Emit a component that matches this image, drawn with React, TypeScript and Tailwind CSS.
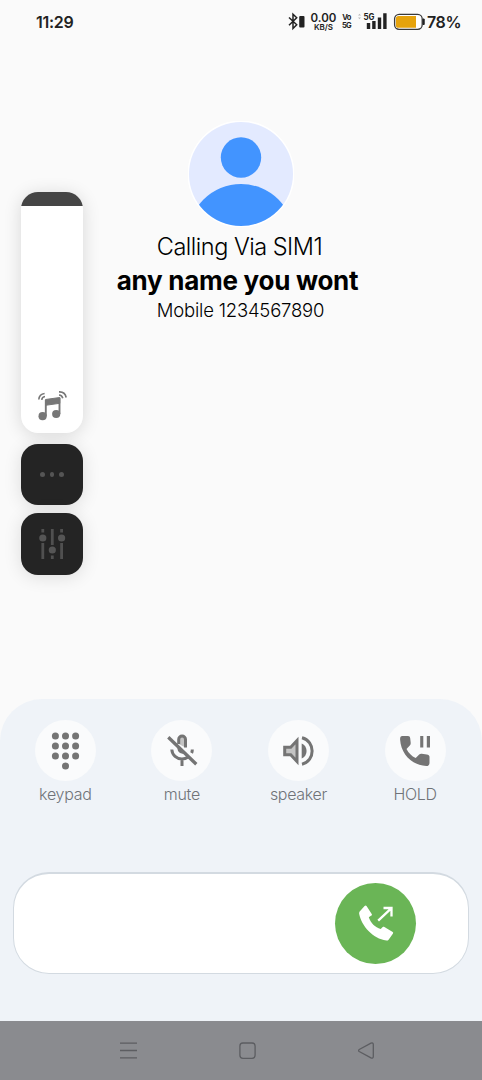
import type { ReactNode } from 'react';

const StatusBar = () => (
  <header className="flex h-11 items-center pl-9 pr-[21px] text-[#222]">
    <span className="w-[38px] whitespace-nowrap text-[16px] font-semibold leading-none tracking-[-0.3px]">11:29</span>

    <div className="ml-auto flex items-center">
      <svg className="h-5 w-[17px]" viewBox="288 12 17 20" fill="none">
        <path d="M289 17.5l7.7 7.3-3.7 3.7V14.3l3.7 3.5-7.7 7.5" stroke="#222" strokeWidth="1.5" />
        <rect x="299.2" y="16" width="5.3" height="11.5" rx="1" fill="#222" />
      </svg>
      <div className="ml-[5px] flex w-[27px] flex-col items-center whitespace-nowrap">
        <span className="text-[11.5px] font-semibold leading-[9px]">0.00</span>
        <span className="text-[8px] font-semibold leading-[8px]">KB/S</span>
      </div>
      <div className="ml-[5px] flex w-[9px] flex-col items-center text-[7.5px] font-bold leading-[8px] tracking-[-0.7px]">
        <span>Vo</span>
        <span>5G</span>
      </div>
      <svg className="ml-[6px] h-5 w-[31px]" viewBox="357 12 31 20">
        <path d="M358 15.5l1.5-1.7 1.5 1.7zM358 17.5l1.5 1.7 1.5-1.7z" fill="#bbb" />
        <text x="363.5" y="20" fontSize="8.5" fontWeight="700" textLength="11" lengthAdjust="spacingAndGlyphs" fill="#222">5G</text>
        <path d="M366.8 23h3.4v6h-3.4zM372.2 21h3.4v8h-3.4zM377.8 17.5h3.4V29h-3.4zM383.2 13.3h3.4V29h-3.4z" fill="#222" />
      </svg>
      <svg className="ml-[5px] h-5 w-[33px]" viewBox="393 12 33 20">
        <rect x="394.6" y="14.3" width="27.6" height="15" rx="4.5" fill="#fff" stroke="#3a3a3a" strokeWidth="1.3" />
        <path d="M398.5 16H416v11.8h-17.5a2.6 2.6 0 0 1-2.6-2.6v-6.6a2.6 2.6 0 0 1 2.6-2.6z" fill="#e6a30c" />
        <path d="M423 19h1.2v5.5H423z" stroke="#222" fill="#222" />
      </svg>
      <span className="ml-[1px] w-[34px] whitespace-nowrap text-[16px] font-semibold leading-none tracking-[-0.4px]">78%</span>
    </div>
  </header>
);

const Contact = () => (
  <section className="flex flex-col items-center pt-[77px] text-black">
    <svg className="h-[106px] w-[106px]" viewBox="188 121 106 106">
      <defs>
        <clipPath id="avatar">
          <circle cx="241" cy="174" r="52" />
        </clipPath>
      </defs>
      <circle cx="241" cy="174" r="53.5" fill="#fff" />
      <circle cx="241" cy="174" r="52" fill="#e3eaff" />
      <circle cx="241" cy="157.5" r="20.2" fill="#4294ff" />
      <circle cx="241" cy="237" r="53" fill="#4294ff" clipPath="url(#avatar)" />
    </svg>
    <p className="mt-[4px] -ml-[3px] whitespace-nowrap text-[23.5px] font-light leading-8 tracking-[-0.5px]">Calling Via SIM1</p>
    <h1 className="mt-[2px] -ml-[7px] whitespace-nowrap text-[26px] font-bold leading-8 tracking-[-0.27px]">any name you wont</h1>
    <p className="mt-[1px] -ml-[1px] whitespace-nowrap text-[18.5px] font-light leading-6 tracking-[-0.2px]">Mobile 1234567890</p>
  </section>
);

const VolumePanel = () => (
  <aside className="absolute left-[21px] top-[192px] flex w-[62px] flex-col">
    <div className="flex h-[241px] flex-col overflow-hidden rounded-[17px] bg-white shadow-[0_2px_18px_rgba(0,0,0,0.14)]">
      <div className="h-[14px] bg-[#454545]" />
      <svg className="mx-auto mt-auto mb-2 h-9 w-10" viewBox="32.5 389 40 36" fill="none">
        <path d="M46 399.5l14.3-2v5.8l-14.3 2z" fill="#777" stroke="#777" strokeWidth="1" />
        <path d="M46.3 400v16M60 398V414" stroke="#777" strokeWidth="1.9" />
        <circle cx="43.1" cy="416.2" r="4.1" fill="#777" />
        <circle cx="56.7" cy="414" r="4.1" fill="#777" />
        <path d="M39.3 399.5q.5-5.5 5.8-6M42.2 399.8q.4-2.8 3.3-3.3M59.5 391.9q6-.3 7.2 5.6M59.5 395q3 0 3.8 3.2" stroke="#777" strokeWidth="1.6" />
      </svg>
    </div>
    <div className="mt-[11px] flex h-[61px] items-center justify-center gap-[5px] rounded-[17px] bg-[#242424] shadow-[0_2px_18px_rgba(0,0,0,0.12)]">
      <span className="h-[4.6px] w-[4.6px] rounded-full bg-[#555]" />
      <span className="h-[4.6px] w-[4.6px] rounded-full bg-[#555]" />
      <span className="h-[4.6px] w-[4.6px] rounded-full bg-[#555]" />
    </div>
    <div className="mt-2 flex h-[62px] items-center justify-center rounded-[17px] bg-[#242424] shadow-[0_2px_18px_rgba(0,0,0,0.12)]">
      <svg className="h-8 w-8" viewBox="36 528 32 32" fill="none">
        <path d="M42.8 529v3.5M42.8 543v16M52.3 529v16M52.3 555.5v3.5M61.6 529v3.5M61.6 543v16" stroke="#505050" strokeWidth="2.8" />
        <circle cx="42.8" cy="538" r="3.6" fill="#555" />
        <circle cx="52.3" cy="550" r="3.6" fill="#555" />
        <circle cx="61.6" cy="538" r="3.6" fill="#555" />
      </svg>
    </div>
  </aside>
);

const KeypadIcon = () => (
  <svg className="h-[61px] w-[61px]" viewBox="35 720 61 61" fill="#747474">
    {[736, 746, 756].map((y) =>
      [55.4, 65.5, 75.6].map((x) => <circle key={`${x}-${y}`} cx={x} cy={y} r="3.5" />)
    )}
    <circle cx="65.5" cy="766" r="3.5" />
  </svg>
);

const MuteIcon = () => (
  <svg className="h-[61px] w-[61px]" viewBox="151 720 61 61" fill="none" stroke="#747474" strokeWidth="3">
    <path d="M178.7 744v-4.5a3.4 3.4 0 0 1 6.8 0v8" fill="#c4c4c4" />
    <path d="M177.5 745l8.2 8c-4 2-8.2-.5-8.2-4.5z" fill="#747474" stroke="none" />
    <path d="M171.8 749.5c.3 5.7 5 9.5 10.2 9.5 2.3 0 4.5-.8 6.2-2M182 759v7M192.3 749.5c0 1.3-.2 2.5-.7 3.5" />
    <path d="M168.3 737.3l28 27" strokeWidth="3.3" />
  </svg>
);

const SpeakerIcon = () => (
  <svg className="h-[61px] w-[61px]" viewBox="268 720 61 61" fill="none" stroke="#747474">
    <path d="M284.7 747.2h6l6.3-6.7v21l-6.3-6.7h-6z" fill="#c4c4c4" strokeWidth="3" />
    <path d="M301.7 743.5c6.5 2.5 6.5 12.5 0 15z" fill="#747474" stroke="none" />
    <path d="M302 737.8c13.5 3.3 13.5 23.2 0 26.5" strokeWidth="3" />
  </svg>
);

const HoldIcon = () => (
  <svg className="h-[61px] w-[61px]" viewBox="385 720 61 61" fill="#747474">
    <path d="M402.3 736h5.7c1.4 0 2 .8 2.2 2.3l.5 4.4c.1 1.2-.2 2-.9 2.8l-3.3 3.4c2.3 4.2 5 7 9.2 9.1l3.5-3.4c.7-.7 1.5-1 2.5-.8l5.1.7c1.6.2 2.7.9 2.7 2.3v6.1c0 1.9-1.2 3.1-3.2 3.1-14.5-.7-25.4-12.1-26.2-26.5-.1-2.1.5-3.5 2.2-3.5z" />
    <path d="M420.2 736h3.1v11.5h-3.1zM426.8 736h3.2v11.5h-3.2z" />
  </svg>
);

const Action = ({ label, children }: { label: string; children: ReactNode }) => (
  <div className="flex w-[116.6px] flex-col items-center">
    <div className="h-[61px] w-[61px] rounded-full bg-[#fafbfc]">{children}</div>
    <span className="mt-[3px] text-[16px] font-light leading-5 tracking-[-0.3px] text-[#707378]">{label}</span>
  </div>
);

const NavBar = () => (
  <nav className="flex h-[59px] items-center bg-[#8a8b8f] pl-[118px]">
    <svg className="h-5 w-5" viewBox="118 1041 20 20" stroke="#5c5d61" strokeWidth="1.3">
      <path d="M120 1043.2h17M120 1050.5h17M120 1057.9h17" />
    </svg>
    <svg className="ml-[100px] h-5 w-5" viewBox="238.5 1041 20 20" fill="none" stroke="#5c5d61" strokeWidth="1.3">
      <rect x="240.4" y="1043" width="15.2" height="15.3" rx="3" />
    </svg>
    <svg className="ml-[98px] h-5 w-5" viewBox="356 1041 20 20" fill="none" stroke="#5c5d61" strokeWidth="1.3">
      <path d="M359.2 1049.5l11.8-6.3c1.4-.7 2.3 0 2.3 1.3v12c0 1.4-.9 2-2.3 1.3l-11.8-6.3c-.8-.5-.8-1.5 0-2z" />
    </svg>
  </nav>
);

export default function App() {
  return (
    <div className="relative flex h-[1080px] w-[482px] flex-col overflow-hidden bg-[#fafafa] font-['Inter','Liberation_Sans',sans-serif]">
      <StatusBar />
      <Contact />
      <VolumePanel />

      {/* Call controls */}
      <main className="mt-auto h-[322px] rounded-t-[42px] bg-[#eff3f8] pt-[21px]">
        <div className="flex pl-[7px]">
          <Action label="keypad"><KeypadIcon /></Action>
          <Action label="mute"><MuteIcon /></Action>
          <Action label="speaker"><SpeakerIcon /></Action>
          <Action label="HOLD"><HoldIcon /></Action>
        </div>

        <div className="ml-[13px] mt-[68px] flex h-[102px] w-[456px] items-center justify-end rounded-[36px] border border-t-2 border-[#d3dae1] bg-white pr-[52px]">
          <button className="h-[81px] w-[81px] rounded-full bg-[#6ab556]">
            <svg className="h-[81px] w-[81px]" viewBox="335 883 81 81" fill="none">
              <path d="M366.7 906.3l5 7.6c.4.8.3 1.3-.4 1.7l-2.5 1.7c1.8 5.7 6.3 10.2 11.900 11.600l2-1.800c.5-.4 1.100-.4 1.700-.1l8.300 4.900c.6.400.7.9.3 1.500l-4.400 6.300c-.5.700-1.200 1-2.200.9-13.600-2-24.800-14.600-27.200-26.600-.2-1.100.1-2 .7-2.700l4.700-5.200c.8-.8 1.500-.7 2.100.2z" fill="#fff" />
              <path d="M378.2 920.6l13-12.3M383.500 908h8v8.500" stroke="#fff" strokeWidth="2.3" />
            </svg>
          </button>
        </div>
      </main>

      <NavBar />
    </div>
  );
}
